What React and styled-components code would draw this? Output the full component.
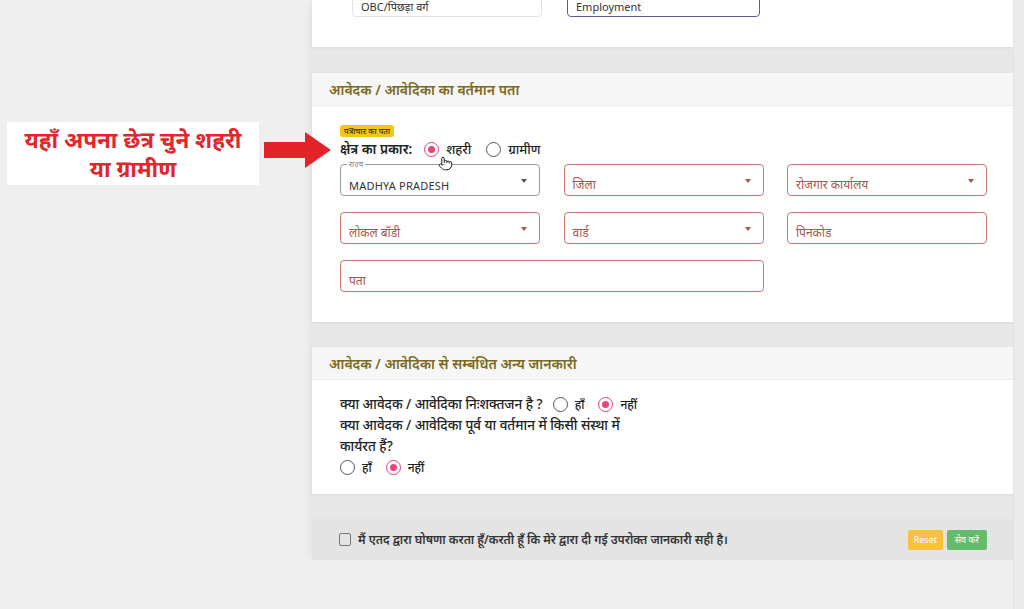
import React from 'react'
import styled, { createGlobalStyle } from 'styled-components'
import { Pointer } from 'lucide-react'

const GlobalStyle = createGlobalStyle`
  body {
    margin: 0;
    background: #efefef;
    font-family: "Noto Sans", "Noto Sans Devanagari", "Lohit Devanagari", sans-serif;
  }
`

const Page = styled.div`
  position: relative;
  width: 1024px;
  height: 609px;
  overflow: hidden;
  display: flex;
  background: #efefef;
`

const LeftPane = styled.div`
  width: 312px;
  flex: none;
  padding: 122px 0 0 7px;
  box-sizing: border-box;
`

const Note = styled.div`
  width: 252px;
  height: 63px;
  background: #fff;
  color: #e3262b;
  font-weight: 700;
  font-size: 22.5px;
  line-height: 29px;
  text-align: center;
  display: flex;
  flex-direction: column;
  justify-content: center;
  white-space: nowrap;
`

const Arrow = styled.svg`
  position: absolute;
  left: 264px;
  top: 132px;
  z-index: 3;
`

const Column = styled.div`
  width: 701px;
  flex: none;
  align-self: flex-start;
  background: #e8e8e8;
  display: flex;
  flex-direction: column;
  gap: 25px;
  box-shadow: -6px 0 10px -6px rgba(0, 0, 0, 0.08);
`

const RightStrip = styled.div`
  flex: 1;
  background: #ebebeb;
  border-left: 1px solid #e2e2e2;
`

const Card = styled.div`
  background: #fff;
  box-shadow: 0 1px 3px rgba(0, 0, 0, 0.06);
`

const TopCard = styled(Card)`
  height: 47px;
  margin-bottom: 1px;
  overflow: hidden;
  display: flex;
  align-items: flex-end;
  gap: 25px;
  padding: 0 0 30px 40px;
  box-sizing: border-box;
`

const TopSelect = styled.div`
  width: ${({ w }) => w}px;
  height: 36px;
  flex: none;
  box-sizing: border-box;
  border: ${({ focus }) => (focus ? '1.5px solid #5b5f8c' : '1px solid #e3e3e3')};
  border-radius: 4px;
  padding: 0 8px 2px;
  display: flex;
  align-items: flex-end;
  font-size: 11px;
  color: #333;
`

const CardHeader = styled.div`
  height: 32px;
  background: #f7f7f7;
  border-bottom: 1px solid #ececec;
  padding: 0 17px;
  display: flex;
  align-items: center;
  color: #7b6a1c;
  font-size: 14px;
  font-weight: 600;
`

const CardBody = styled.div`
  padding: ${({ pad }) => pad};
`

const Badge = styled.span`
  display: block;
  width: fit-content;
  background: #f5c518;
  color: #3a2e00;
  font-size: 8px;
  line-height: 12px;
  padding: 0 4px;
  border-radius: 3px;
  font-weight: 500;
`

const TypeRow = styled.div`
  display: flex;
  align-items: center;
  height: 20px;
  margin-top: 2px;
  color: #222;
  font-size: 13.5px;
  font-weight: 600;
`

const Options = styled.div`
  display: flex;
  align-items: center;
  gap: ${({ gap }) => gap}px;
  margin-left: ${({ ml }) => ml || 0}px;
`

const Option = styled.label`
  position: relative;
  display: flex;
  align-items: center;
  gap: 7px;
  font-size: ${({ fs }) => fs || 13}px;
  font-weight: 500;
  color: #222;
`

const Radio = styled.span`
  width: 15px;
  height: 15px;
  box-sizing: border-box;
  border-radius: 50%;
  border: 1.5px solid ${({ on }) => (on ? '#e0457b' : '#555')};
  display: flex;
  align-items: center;
  justify-content: center;
  &::after {
    content: '';
    width: 7px;
    height: 7px;
    border-radius: 50%;
    background: ${({ on }) => (on ? '#e8437a' : 'transparent')};
  }
`

const Cursor = styled.span`
  position: absolute;
  left: 14px;
  top: 16px;
  display: flex;
  z-index: 2;
`

const FieldGrid = styled.div`
  display: grid;
  grid-template-columns: repeat(3, 200px);
  column-gap: 23.5px;
  row-gap: 16px;
  margin-top: 5px;
`

const Field = styled.div`
  position: relative;
  grid-column: ${({ span }) => (span ? `span ${span}` : 'auto')};
  height: 32px;
  box-sizing: border-box;
  border: ${({ filled }) => (filled ? '1px solid #9a9a9a' : '1.5px solid #cf756f')};
  border-radius: 4px;
  padding: 0 8px 2px;
  display: flex;
  align-items: flex-end;
  font-size: ${({ filled }) => (filled ? 11 : 12)}px;
  color: ${({ filled }) => (filled ? '#333' : '#a8554f')};
  letter-spacing: ${({ filled }) => (filled ? '0.2px' : '0')};
`

const Legend = styled.span`
  position: absolute;
  left: 6px;
  top: -6px;
  padding: 0 2px;
  background: #fff;
  font-size: 7.5px;
  line-height: 10px;
  color: #777;
`

const Caret = styled.span`
  position: absolute;
  right: 12px;
  top: 14px;
  width: 0;
  height: 0;
  border-left: 3.5px solid transparent;
  border-right: 3.5px solid transparent;
  border-top: 4px solid ${({ dark }) => (dark ? '#555' : '#a8554f')};
`

const Question = styled.div`
  font-size: 13.5px;
  font-weight: 500;
  color: #222;
  line-height: 21px;
  display: ${({ inline }) => (inline ? 'flex' : 'block')};
  align-items: center;
  width: ${({ w }) => (w ? `${w}px` : 'auto')};
`

const Footer = styled.div`
  height: 41px;
  background: #e4e4e4;
  display: flex;
  align-items: center;
  padding: 0 26px 0 27px;
  box-sizing: border-box;
`

const Check = styled.span`
  width: 12px;
  height: 13px;
  box-sizing: border-box;
  border: 1.5px solid #777;
  border-radius: 2px;
  margin-right: 7px;
  flex: none;
`

const Declare = styled.span`
  font-size: 12px;
  font-weight: 600;
  color: #333;
  flex: 1;
`

const Btn = styled.button`
  height: 20px;
  border: none;
  border-radius: 2px;
  padding: 0 ${({ px }) => px}px;
  margin-left: 4px;
  background: ${({ bg }) => bg};
  color: #fff;
  font-family: inherit;
  font-size: 9px;
`

const fields = [
  { label: 'MADHYA PRADESH', legend: 'राज्य', filled: true, caret: true },
  { label: 'जिला', caret: true },
  { label: 'रोजगार कार्यालय', caret: true },
  { label: 'लोकल बॉडी', caret: true },
  { label: 'वार्ड', caret: true },
  { label: 'पिनकोड' },
  { label: 'पता', span: 2 },
]

const App = () => (
  <Page>
    <GlobalStyle />
    <LeftPane>
      <Note>
        <span>यहाँ अपना छेत्र चुने शहरी</span>
        <span>या ग्रामीण</span>
      </Note>
    </LeftPane>
    <Arrow width="68" height="36" viewBox="0 0 68 36">
      <polygon points="0,10 41,10 41,0 67,18 41,36 41,26 0,26" fill="#e3232a" />
    </Arrow>

    <Column>
      <TopCard>
        <TopSelect w={190}>OBC/पिछड़ा वर्ग</TopSelect>
        <TopSelect w={193} focus>Employment</TopSelect>
      </TopCard>

      <Card>
        <CardHeader>आवेदक / आवेदिका का वर्तमान पता</CardHeader>
        <CardBody pad="19px 27px 30px 28px">
          <Badge>पत्राचार का पता</Badge>
          <TypeRow>
            क्षेत्र का प्रकार:
            <Options gap={15} ml={12}>
              <Option>
                <Radio on />
                शहरी
                <Cursor>
                  <Pointer size={15} fill="#fff" color="#222" strokeWidth={1.6} />
                </Cursor>
              </Option>
              <Option>
                <Radio />
                ग्रामीण
              </Option>
            </Options>
          </TypeRow>
          <FieldGrid>
            {fields.map((f, i) => (
              <Field key={`f${i}`} filled={f.filled} span={f.span}>
                {f.legend && <Legend>{f.legend}</Legend>}
                {f.label}
                {f.caret && <Caret dark={f.filled} />}
              </Field>
            ))}
          </FieldGrid>
        </CardBody>
      </Card>

      <Card>
        <CardHeader>आवेदक / आवेदिका से सम्बंधित अन्य जानकारी</CardHeader>
        <CardBody pad="14px 27px 16px 28px">
          <Question inline>
            क्या आवेदक / आवेदिका निःशक्तजन है ?
            <Options gap={14} ml={10}>
              <Option fs={12}>
                <Radio />
                हाँ
              </Option>
              <Option fs={12}>
                <Radio on />
                नहीं
              </Option>
            </Options>
          </Question>
          <Question w={305}>
            क्या आवेदक / आवेदिका पूर्व या वर्तमान में किसी संस्था में कार्यरत हैं?
          </Question>
          <Question inline>
            <Options gap={14}>
              <Option fs={12}>
                <Radio />
                हाँ
              </Option>
              <Option fs={12}>
                <Radio on />
                नहीं
              </Option>
            </Options>
          </Question>
        </CardBody>
      </Card>

      <Footer>
        <Check />
        <Declare>मैं एतद द्वारा घोषणा करता हूँ/करती हूँ कि मेरे द्वारा दी गई उपरोक्त जानकारी सही है।</Declare>
        <Btn bg="#f8c13c" px={6}>Reset</Btn>
        <Btn bg="#64bb6c" px={8}>सेव करें</Btn>
      </Footer>
    </Column>
    <RightStrip />
  </Page>
)

export default App
